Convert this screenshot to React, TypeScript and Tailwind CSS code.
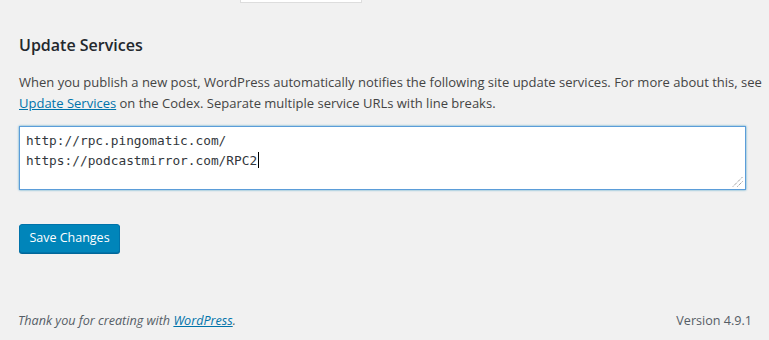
import React from 'react';

const sans = { fontFamily: '"Open Sans", "Noto Sans", sans-serif' };
const mono = { fontFamily: '"DejaVu Sans Mono", "Liberation Mono", monospace' };

function ResizeGrip() {
  return (
    <svg className="absolute right-[2px] bottom-[2px]" width="11" height="11" viewBox="0 0 11 11">
      <line x1="1" y1="10.5" x2="10.5" y2="1" stroke="#777" strokeWidth="1" strokeDasharray="1 1" />
      <line x1="5.5" y1="10.5" x2="10.5" y2="5.5" stroke="#777" strokeWidth="1" strokeDasharray="1 1" />
    </svg>
  );
}

export default function App() {
  return (
    <div className="min-h-[340px] w-[769px] bg-[#f1f1f1] text-[13px] text-[#444]" style={sans}>
      <div className="pl-[240px]">
        <div className="h-[3px] w-[122px] border-x border-b border-[#ddd] bg-white" />
      </div>

      <div className="pl-[19px] pr-[6px]">
        <h2 className="mt-[30px] text-[16px] leading-[24px] font-semibold text-[#23282d]">Update Services</h2>

        <p className="mt-[15px] leading-[21px] whitespace-nowrap">
          When you publish a new post, WordPress automatically notifies the following site update services. For more about this, see
          <br />
          <a href="#" className="text-[#0073aa] underline">Update Services</a> on the Codex. Separate multiple service URLs with line breaks.
        </p>

        <div
          className="relative mt-[12px] h-[64px] w-[727px] border border-[#5b9dd9] bg-white px-[6px] py-[4px] text-[12.8px] leading-[19.5px] text-[#32373c] shadow-[0_0_2px_rgba(30,140,190,0.8)]"
          style={mono}
        >
          <div>http://rpc.pingomatic.com/</div>
          <div className="flex items-center">
            https://podcastmirror.com/RPC2
            <span className="ml-[1px] inline-block h-[16px] w-px bg-black" />
          </div>
          <ResizeGrip />
        </div>

        <button className="mt-[34px] h-[29px] w-[101px] rounded-[3px] border border-[#0073aa] bg-[#0085ba] text-[12.5px] text-white shadow-[0_1px_0_#006799]">
          Save Changes
        </button>
      </div>

      <div className="mt-[58px] flex justify-between pl-[18px] pr-[17px] text-[12.6px] leading-[20px] text-[#555d66]">
        <span className="italic">
          Thank you for creating with <a href="#" className="text-[#0073aa] underline">WordPress</a>.
        </span>
        <span>Version 4.9.1</span>
      </div>
    </div>
  );
}
